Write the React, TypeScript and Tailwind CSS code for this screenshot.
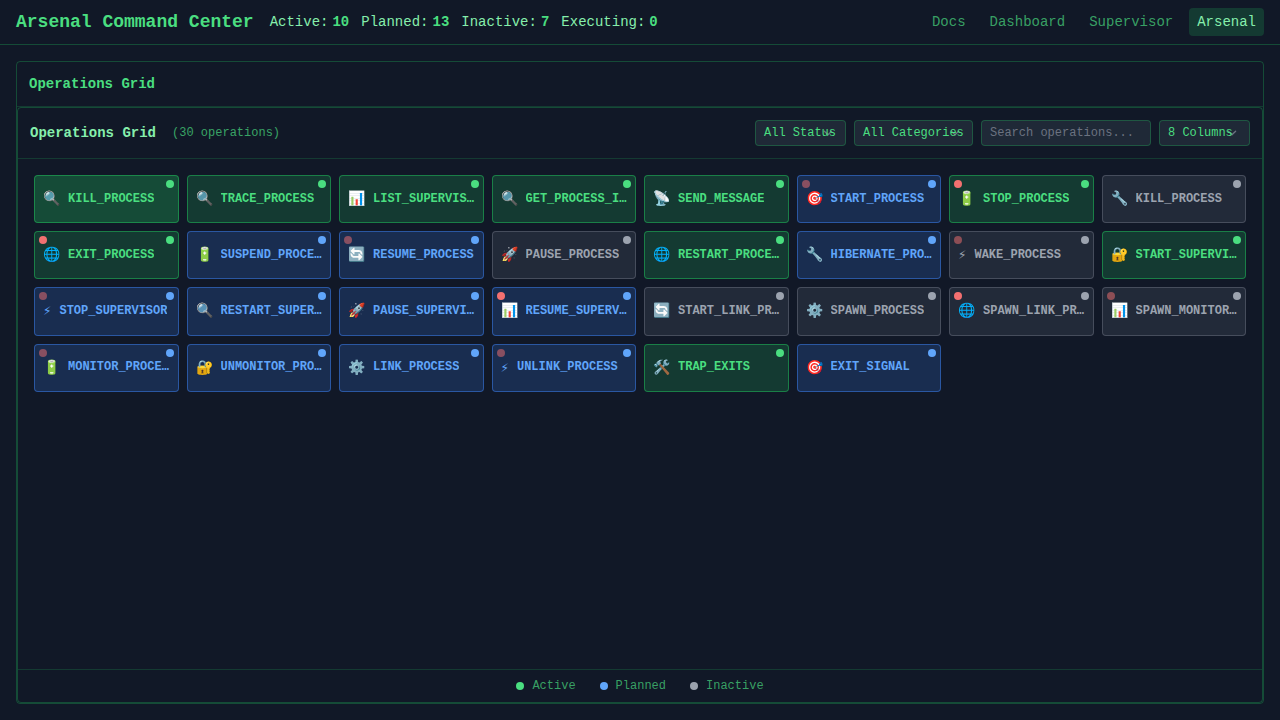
type Status = "active" | "planned" | "inactive";
type Alert = "on" | "dim" | null;
type Operation = [icon: string, name: string, status: Status, alert: Alert];

const operations: Operation[] = [
  ["🔍", "KILL_PROCESS", "active", null],
  ["🔍", "TRACE_PROCESS", "active", null],
  ["📊", "LIST_SUPERVISORS", "active", null],
  ["🔍", "GET_PROCESS_INFO", "active", null],
  ["📡", "SEND_MESSAGE", "active", null],
  ["🎯", "START_PROCESS", "planned", "dim"],
  ["🔋", "STOP_PROCESS", "active", "on"],
  ["🔧", "KILL_PROCESS", "inactive", null],
  ["🌐", "EXIT_PROCESS", "active", "on"],
  ["🔋", "SUSPEND_PROCESS", "planned", null],
  ["🔄", "RESUME_PROCESS", "planned", "dim"],
  ["🚀", "PAUSE_PROCESS", "inactive", null],
  ["🌐", "RESTART_PROCESS", "active", null],
  ["🔧", "HIBERNATE_PROCESS", "planned", null],
  ["⚡︎", "WAKE_PROCESS", "inactive", "dim"],
  ["🔐", "START_SUPERVISOR", "active", null],
  ["⚡︎", "STOP_SUPERVISOR", "planned", "dim"],
  ["🔍", "RESTART_SUPERVISOR", "planned", null],
  ["🚀", "PAUSE_SUPERVISOR", "planned", null],
  ["📊", "RESUME_SUPERVISOR", "planned", "on"],
  ["🔄", "START_LINK_PROCESS", "inactive", null],
  ["⚙️", "SPAWN_PROCESS", "inactive", null],
  ["🌐", "SPAWN_LINK_PROCESS", "inactive", "on"],
  ["📊", "SPAWN_MONITOR_PROCESS", "inactive", "dim"],
  ["🔋", "MONITOR_PROCESS", "planned", "dim"],
  ["🔐", "UNMONITOR_PROCESS", "planned", null],
  ["⚙️", "LINK_PROCESS", "planned", null],
  ["⚡︎", "UNLINK_PROCESS", "planned", "dim"],
  ["🛠️", "TRAP_EXITS", "active", null],
  ["🎯", "EXIT_SIGNAL", "planned", null],
];

const cardStyles: Record<Status, string> = {
  active: "border-[#22c55e]/50 text-[#4ade80]",
  planned: "border-[#3b82f6]/50 bg-[#3b82f6]/20 text-[#60a5fa]",
  inactive: "border-[#6b7280]/50 bg-[#6b7280]/20 text-[#9ca3af]",
};

const dotStyles: Record<Status, string> = {
  active: "bg-[#4ade80]",
  planned: "bg-[#60a5fa]",
  inactive: "bg-[#9ca3af]",
};

const stats: [string, number][] = [
  ["Active:", 10],
  ["Planned:", 13],
  ["Inactive:", 7],
  ["Executing:", 0],
];

const legend: [string, Status][] = [
  ["Active", "active"],
  ["Planned", "planned"],
  ["Inactive", "inactive"],
];

function Select({ label, width }: { label: string; width: string }) {
  return (
    <button
      className={`relative flex h-[26px] items-center rounded-[4px] border border-[#22c55e]/30 bg-[#1f2937] px-2 text-left text-xs whitespace-nowrap text-[#4ade80] ${width}`}
    >
      <svg
        className="absolute top-[3px] right-2 h-[18px] w-[18px]"
        viewBox="0 0 20 20"
        fill="none"
        stroke="#6b7280"
        strokeWidth="1.5"
        strokeLinecap="round"
        strokeLinejoin="round"
      >
        <path d="M6 8l4 4 4-4" />
      </svg>
      <span className="relative">{label}</span>
    </button>
  );
}

function OperationCard({ operation, selected }: { operation: Operation; selected: boolean }) {
  const [icon, name, status, alert] = operation;
  const fill = status === "active" ? (selected ? "bg-[#22c55e]/30" : "bg-[#22c55e]/20") : "";
  return (
    <div className={`relative h-[48.18px] min-w-0 rounded-[4px] border p-2 ${cardStyles[status]} ${fill}`}>
      <div className="flex h-[29.2px] items-center gap-2">
        <span className="shrink-0 pt-px text-sm">{icon}</span>
        <span className="truncate text-xs font-bold">{name}</span>
      </div>
      <span className={`absolute top-1 right-1 h-2 w-2 rounded-full ${dotStyles[status]}`} />
      {alert && (
        <span
          className={`absolute top-1 left-1 h-2 w-2 rounded-full bg-[#f87171] ${alert === "dim" ? "opacity-50" : "opacity-98"}`}
        />
      )}
    </div>
  );
}

export default function App() {
  return (
    <div className="flex h-screen flex-col overflow-hidden bg-[#111827] font-['Liberation_Mono',monospace] text-[#4ade80]">
      <header className="flex items-center justify-between border-b border-[#22c55e]/30 px-4 py-2">
        <div className="flex items-center gap-4">
          <h1 className="text-lg leading-7 font-bold">Arsenal Command Center</h1>
          <div className="flex gap-3 text-sm text-[#86efac]">
            {stats.map(([label, value]) => (
              <div key={label} className="flex gap-1">
                <span>{label}</span>
                <span className="font-bold text-[#4ade80]">{value}</span>
              </div>
            ))}
          </div>
        </div>
        <nav className="flex gap-2 text-sm text-[#4ade80]/70">
          <a className="px-2 py-1">Docs</a>
          <a className="px-2 py-1">Dashboard</a>
          <a className="px-2 py-1">Supervisor</a>
          <a className="rounded-[4px] bg-[#22c55e]/20 px-2 py-1 text-[#86efac]">Arsenal</a>
        </nav>
      </header>

      <main className="flex min-h-0 flex-1 flex-col p-4">
        <section className="flex min-h-0 flex-1 flex-col rounded-[4px] border border-[#22c55e]/30">
          <div className="border-b border-[#22c55e]/20 p-3 text-sm font-bold">Operations Grid</div>
          <div className="flex min-h-0 flex-1 flex-col rounded-[4px] border border-[#22c55e]/30">
            <div className="flex items-center justify-between border-b border-[#22c55e]/20 p-3">
              <div className="flex items-center gap-4">
                <h2 className="text-sm font-bold text-[#86efac]">Operations Grid</h2>
                <span className="text-xs opacity-70">(30 operations)</span>
              </div>
              <div className="flex gap-2">
                <Select label="All Status" width="w-[91px]" />
                <Select label="All Categories" width="w-[119px]" />
                <input
                  className="h-[26px] w-[170px] rounded-[4px] border border-[#22c55e]/30 bg-[#1f2937] px-2 text-xs placeholder:text-[#6b7280]"
                  placeholder="Search operations..."
                />
                <Select label="8 Columns" width="w-[91px]" />
              </div>
            </div>

            <div className="min-h-0 flex-1 p-4">
              <div className="grid grid-cols-8 gap-2">
                {operations.map((operation, index) => (
                  <OperationCard key={index} operation={operation} selected={index === 0} />
                ))}
              </div>
            </div>

            <footer className="flex justify-center gap-6 border-t border-[#22c55e]/20 p-2 text-xs text-[#4ade80]/70">
              {legend.map(([label, status]) => (
                <div key={label} className="flex items-center gap-2">
                  <span className={`h-2 w-2 rounded-full ${dotStyles[status]}`} />
                  <span>{label}</span>
                </div>
              ))}
            </footer>
          </div>
        </section>
      </main>
    </div>
  );
}
